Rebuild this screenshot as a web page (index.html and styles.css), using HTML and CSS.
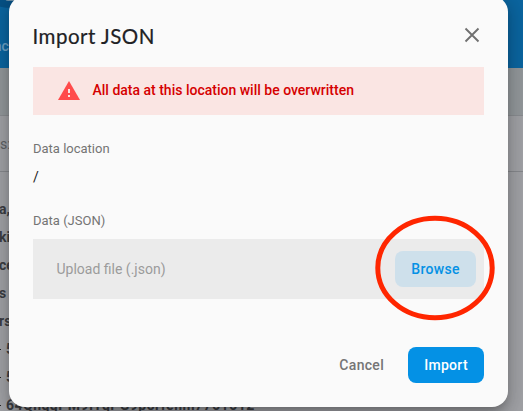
FILE: index.html
```html
<!DOCTYPE html>
<html lang="en">
<head>
<meta charset="utf-8">
<title>Import JSON</title>
<link rel="stylesheet" href="styles.css">
</head>
<body>
<div class="page">
  <header class="topbar"><i class="shade"></i><i class="chip"></i><span>ac</span></header>
  <div class="toolbar"></div>
  <div class="url">s:</div>
  <div class="tree">
    <div class="node key">a,</div>
    <div class="node key">ki</div>
    <div class="node key">ce</div>
    <div class="node key">s</div>
    <div class="node key">rs</div>
    <div class="node item"><i></i>5</div>
    <div class="node item"><i></i>5</div>
    <div class="node item"><i></i><span class="id">64QhqqPM9ITqPG9porfenm7761612</span></div>
  </div>
</div>
<section class="dialog" role="dialog">
  <header class="heading">
    <h1>Import JSON</h1>
    <svg class="close" viewBox="0 0 16 16"><path d="M1.5 1.5 14.5 14.5M14.5 1.5 1.5 14.5"/></svg>
  </header>
  <div class="warning">
    <svg viewBox="0 0 22 19"><path class="tri" d="M11 0 22 19H0Z"/><path class="bang" d="M10 8h2v4h-2zM10 14h2v2h-2z"/></svg>
    <span>All data at this location will be overwritten</span>
  </div>
  <div class="label location-label">Data location</div>
  <div class="path">/</div>
  <div class="label data-label">Data (JSON)</div>
  <div class="upload">
    <span class="placeholder">Upload file (.json)</span>
    <button class="browse">Browse</button>
    <svg class="ring" viewBox="0 0 120 106"><ellipse cx="60" cy="53" rx="57.2" ry="49.7"/></svg>
  </div>
  <footer class="actions">
    <button class="cancel">Cancel</button>
    <button class="import">Import</button>
  </footer>
</section>
</body>
</html>
```
FILE: styles.css
```css
* { box-sizing: border-box; }
body { margin: 0; width: 523px; height: 411px; overflow: hidden; position: relative; font-family: Roboto, sans-serif; background: #9fa0a4; }
button { border: 0; padding: 0; background: none; font: 500 14px/20px Roboto, sans-serif; letter-spacing: .3px; }
.page { height: 411px; overflow: hidden; color: #3b3d42; }
.topbar { height: 68px; background: #0b649e; position: relative; overflow: hidden; font-size: 14px; line-height: 16px; color: #6c9fc2; }
.topbar span { display: block; margin: 38px 0 0 -6px; font-weight: 500; }
.shade { position: absolute; left: -18px; top: -28px; width: 60px; height: 36px; border-radius: 50%; background: #075084; }
.chip { position: absolute; left: 5px; top: -5px; width: 15px; height: 6px; border-radius: 3px; background: #698ca5; }
.toolbar { height: 48px; background: #919699; border-bottom: 1px solid #888b8f; }
.url { height: 56px; border-bottom: 1px solid #85878b; font-size: 14px; line-height: 57px; color: #5d5f63; }
.tree { padding-top: 23px; }
.node { height: 28px; font-size: 14px; line-height: 28px; font-weight: 700; white-space: nowrap; }
.key { margin-left: -1px; }
.item { display: flex; align-items: center; gap: 5px; }
.item i { width: 1px; height: 1px; background: #222; }
.id { letter-spacing: .48px; }
.dialog { position: absolute; left: 9px; top: -4px; width: 499px; height: 411px; padding: 29px 24px 0; background: #fafafa; border-radius: 16px; box-shadow: 0 7px 8px -4px #0003, 0 8px 20px 2px #00000024, 0 3px 14px 2px #0000001a; }
.heading { display: flex; justify-content: space-between; height: 42px; }
h1 { position: relative; top: -1px; left: -.5px; margin: 0; font: 400 20.5px/24px Lato, sans-serif; color: #202124; letter-spacing: .5px; -webkit-text-stroke: .2px #202124; }
.close { width: 16px; height: 16px; margin: 2px 4.5px 0 0; overflow: visible; }
.close path { stroke: #707070; stroke-width: 1.9; fill: none; }
.warning { height: 48px; display: flex; align-items: center; gap: 12.5px; padding-left: 25px; background: #fae5e3; color: #d50000; font-size: 14px; line-height: 20px; font-weight: 500; }
.warning span { position: relative; top: -1px; }
.warning svg { width: 22px; height: 19px; margin-bottom: 2px; }
.tri { fill: #ff4b4b; }
.bang { fill: #fae5e3; }
.label { font-size: 13px; line-height: 20px; color: #747474; }
.location-label { margin-top: 24px; }
.path { margin-top: 8px; font-size: 14px; line-height: 20px; color: #212121; }
.data-label { margin-top: 24px; }
.upload { position: relative; margin-top: 8px; height: 60px; padding: 0 8px 0 23.5px; background: #ebebeb; display: flex; justify-content: space-between; align-items: center; }
.placeholder { font-size: 14px; line-height: 20px; color: #9b9b9b; }
.browse { width: 81px; height: 36px; border-radius: 8px; background: #cee0eb; color: #0491e5; }
.ring { position: absolute; left: 342px; top: -24px; width: 120px; height: 106px; }
.ring ellipse { fill: none; stroke: #ff2600; stroke-width: 5; }
.actions { margin-top: 48px; display: flex; justify-content: flex-end; align-items: center; gap: 24px; }
.cancel { color: #757575; }
.import { width: 76px; height: 36px; border-radius: 8px; background: #0491e5; color: #fff; }
```
